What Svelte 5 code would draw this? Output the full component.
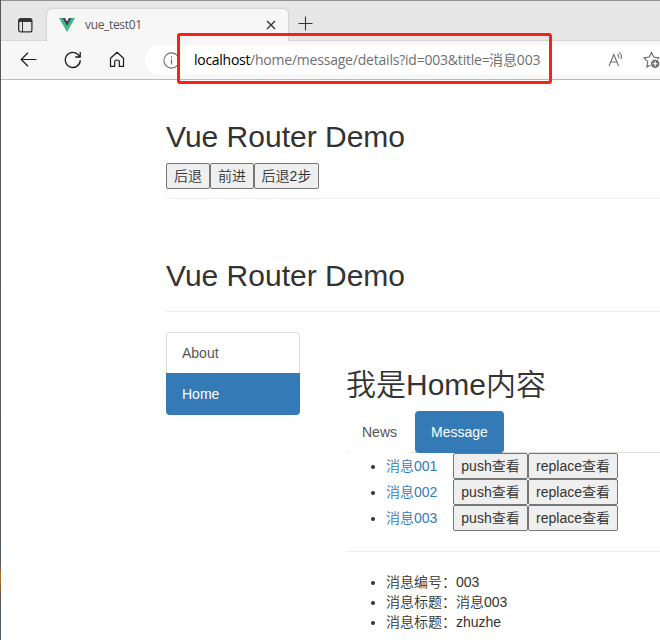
<script>
  const messages = ['001', '002', '003'];
  const details = ['消息编号：003', '消息标题：消息003', '消息标题：zhuzhe'];
</script>

<div class="window">
  <header>
    <div class="tabstrip">
      <svg class="panel" width="15" height="15" viewBox="0 0 15 15"><rect x=".7" y=".7" width="13.2" height="13.2" rx="2" fill="none" stroke="#333" stroke-width="1.3"/><path d="M1 1h13v3H1z" fill="#333"/><path d="M4.5 4v10" stroke="#333"/></svg>
      <div class="tab">
        <svg class="vue" width="16" height="14" viewBox="0 0 16 14"><path d="M0 0h3.2L8 8.3 12.8 0H16L8 14z" fill="#41b883"/><path d="M3.2 0H6l2 3.5L10 0h2.8L8 8.3z" fill="#35495e"/></svg>
        <span class="tabtitle">vue_test01</span>
        <svg class="close" width="10" height="10" viewBox="0 0 10 10"><path d="M1 1l8 8M9 1L1 9" stroke="#333" stroke-width="1.3"/></svg>
      </div>
      <svg class="plus" width="15" height="15" viewBox="0 0 15 15"><path d="M7.5 0.5v14M.5 7.5h14" stroke="#333" stroke-width="1.1"/></svg>
    </div>
    <div class="toolbar">
      <svg class="back" width="17" height="15" viewBox="0 0 17 15" fill="none" stroke="#1b1b1b" stroke-width="1.2"><path d="M16.5 7.5H1M8 .8L1.2 7.5 8 14.2"/></svg>
      <svg class="reload" width="18" height="18" viewBox="0 0 18 18" fill="none" stroke="#1b1b1b" stroke-width="1.3"><path d="M16.3 9.2A7.5 7.5 0 1 1 14.6 4.2L16 5.8M16.2 1v5h-5"/></svg>
      <svg class="house" width="16" height="17" viewBox="0 0 16 17" fill="none" stroke="#1b1b1b" stroke-width="1.2"><path d="M1.5 7.2L8 1.3l6.5 5.9v8.2h-4.2v-4.6c0-2.4-4.6-2.4-4.6 0v4.6H1.5z" stroke-linejoin="round"/></svg>
      <div class="address">
        <svg class="info" width="17" height="17" viewBox="0 0 17 17"><circle cx="8.5" cy="8.5" r="7.6" fill="none" stroke="#707070" stroke-width="1.1"/><path d="M8.5 7.2v5.3M8.5 4.3v1.5" stroke="#707070" stroke-width="1.2"/></svg>
        <div class="url"><b>localhost</b><span class="path">/home/message/details?id=003&amp;title=</span><span class="query">消息003</span></div>
        <svg class="read" width="17" height="17" viewBox="0 0 17 17" fill="none" stroke="#707070" stroke-width="1.1"><path d="M1 15L5.8 3.5 10.6 15M2.7 11h6.2M9.5 3c1.3 1 1.7 2.4 1.3 4M11.2 1.2c2.1 1.8 2.8 4.2 1.8 6.8"/></svg>
        <svg class="star" width="18" height="18" viewBox="0 0 18 18"><path d="M8.5 1.5l2.2 4.6 5.1.8-3.7 3.7 1 5.4-4.6-2.5L3.9 16l.9-5.4L1 6.9l5.2-.8z" fill="none" stroke="#666" stroke-width="1.1"/><circle cx="12.2" cy="12.8" r="4.7" fill="#707070" stroke="#fff"/><path d="M9.7 12.8h5M12.2 10.3v5" stroke="#fff" stroke-width="1.1"/></svg>
      </div>
    </div>
    <div class="highlight"></div>
  </header>

  <main>
    <h2>Vue Router Demo</h2>
    <div class="buttons"><button style:width="44px">后退</button><button style:width="44px">前进</button><button style:width="65px">后退2步</button></div>
    <hr class="first" />
    <h2 class="second">Vue Router Demo</h2>
    <hr class="under" />
    <div class="columns">
      <nav><a href="#about">About</a><a class="active" href="#home">Home</a></nav>
      <section>
        <h2 class="title">我是Home内容</h2>
        <div class="tabs"><a class="news" href="#news">News</a><a class="message" href="#message">Message</a></div>
        <ul class="messages">
          {#each messages as id}
            <li><a href="#details">消息{id}</a><button class="push">push查看</button><button class="replace">replace查看</button></li>
          {/each}
        </ul>
        <hr class="split" />
        <ul class="details">
          {#each details as text}<li>{text}</li>{/each}
        </ul>
      </section>
    </div>
  </main>
  <i class="edge"></i>
</div>

<style>
  :global(body) { margin: 0; overflow: hidden; background: #fff; }
  * { box-sizing: border-box; }
  .window { position: relative; width: 660px; height: 640px; overflow: hidden; font: 350 14px/20px "Liberation Sans", "Noto Sans CJK SC", sans-serif; color: #333; }
  .edge { position: absolute; left: 0; top: 0; width: 1px; height: 640px; background: linear-gradient(#55565b, #575b68 85%, #4d5868 88%, #b87429 90%, #66504c 93%, #4f596b 95%, #555e6c); }
  svg { display: block; flex: none; }
  header { position: relative; height: 80px; background: #f7f7f7; border-bottom: 1px solid #bbb; }
  .tabstrip { display: flex; height: 41px; background: #e7e7e7; border-top: 1px solid #939393; border-bottom: 1px solid #d5d5d5; }
  .panel { margin: 17px 0 0 18px; }
  .tab { display: flex; width: 241px; height: 32px; margin: 8px 0 0 14px; padding-left: 12px; background: #f7f7f7; border-radius: 5px 5px 0 0; box-shadow: 0 0 2px #aaa; clip-path: inset(-3px -3px 0); }
  .vue { margin-top: 9px; }
  .tabtitle { width: 196px; margin-left: 10px; padding-top: 6px; font: 12px/20px "Open Sans", sans-serif; letter-spacing: -.34px; color: #555; }
  .close { margin: 11px 0 0 -15px; }
  .plus { margin: 15px 0 0 10px; }
  .toolbar { display: flex; height: 38px; }
  .back { margin: 11px 0 0 20px; }
  .reload { margin: 10px 0 0 27px; }
  .house { margin: 10px 0 0 27px; }
  .address { display: flex; width: 540px; height: 30px; margin: 4px 0 0 20px; background: #fff; border-radius: 15px 0 0 15px; }
  .info { margin: 7px 0 0 18px; }
  .url { display: flex; width: 348px; margin-left: 14px; white-space: nowrap; font: 14px/30px "Open Sans", "Noto Sans CJK SC", sans-serif; color: #707070; }
  .url b { width: 56px; font-weight: 400; color: #000; letter-spacing: -.28px; }
  .path { width: 239px; letter-spacing: -.21px; }
  .query { letter-spacing: -.1px; }
  .read { margin: 6px 0 0 66px; }
  .star { margin: 6px 0 0 18px; }
  .highlight { position: absolute; left: 177px; top: 33px; width: 375px; height: 51px; border: 3px solid #fb2016; border-radius: 3px; z-index: 1; }
  main { padding: 40px 0 0 166px; }
  h2 { height: 33px; margin: 0; font-size: 30px; font-weight: 350; line-height: 33px; white-space: nowrap; }
  hr { height: 1px; margin: 0; border: 0; background: #eee; }
  button { height: 26px; padding: 0; border: 1px solid #767676; border-radius: 2px; background: #efefef; color: #333; font: inherit; line-height: 22px; white-space: nowrap; }
  .buttons { display: flex; margin-top: 10px; }
  .first { margin-top: 9px; }
  .second { margin-top: 60px; }
  .under { margin-top: 19px; }
  .columns { display: flex; margin-top: 20px; }
  a { color: #337ab7; text-decoration: none; }
  nav { width: 134px; height: 83px; flex: none; }
  nav a { display: block; height: 41px; padding: 10px 15px; border: 1px solid #ddd; border-bottom: 0; border-radius: 4px 4px 0 0; color: #555; }
  nav a.active { height: 42px; padding-top: 11px; background: #337ab7; border: 0; padding-left: 16px; border-radius: 0 0 4px 4px; color: #fff; }
  section { flex: 1; margin-left: 46px; padding-top: 37px; }
  .title { line-height: 31px; }
  .tabs { display: flex; height: 42px; margin-top: 9px; border-bottom: 1px solid #ddd; }
  .tabs a { height: 42px; line-height: 20px; padding: 11px 0 0 16px; border-radius: 4px; }
  .tabs .news { width: 67px; color: #555; background: #fff; }
  .tabs .message { width: 89px; margin-left: 2px; color: #fff; background: #337ab7; }
  ul { margin: 0; padding-left: 40px; }
  .messages li { height: 26px; line-height: 26px; }
  .messages li a { display: inline-block; width: 67px; }
  .messages li button { vertical-align: top; }
  .push { width: 75px; }
  .replace { width: 90px; }
  .split { margin-top: 20px; }
  .details { margin-top: 20px; }
  .details li { height: 20px; }
</style>
